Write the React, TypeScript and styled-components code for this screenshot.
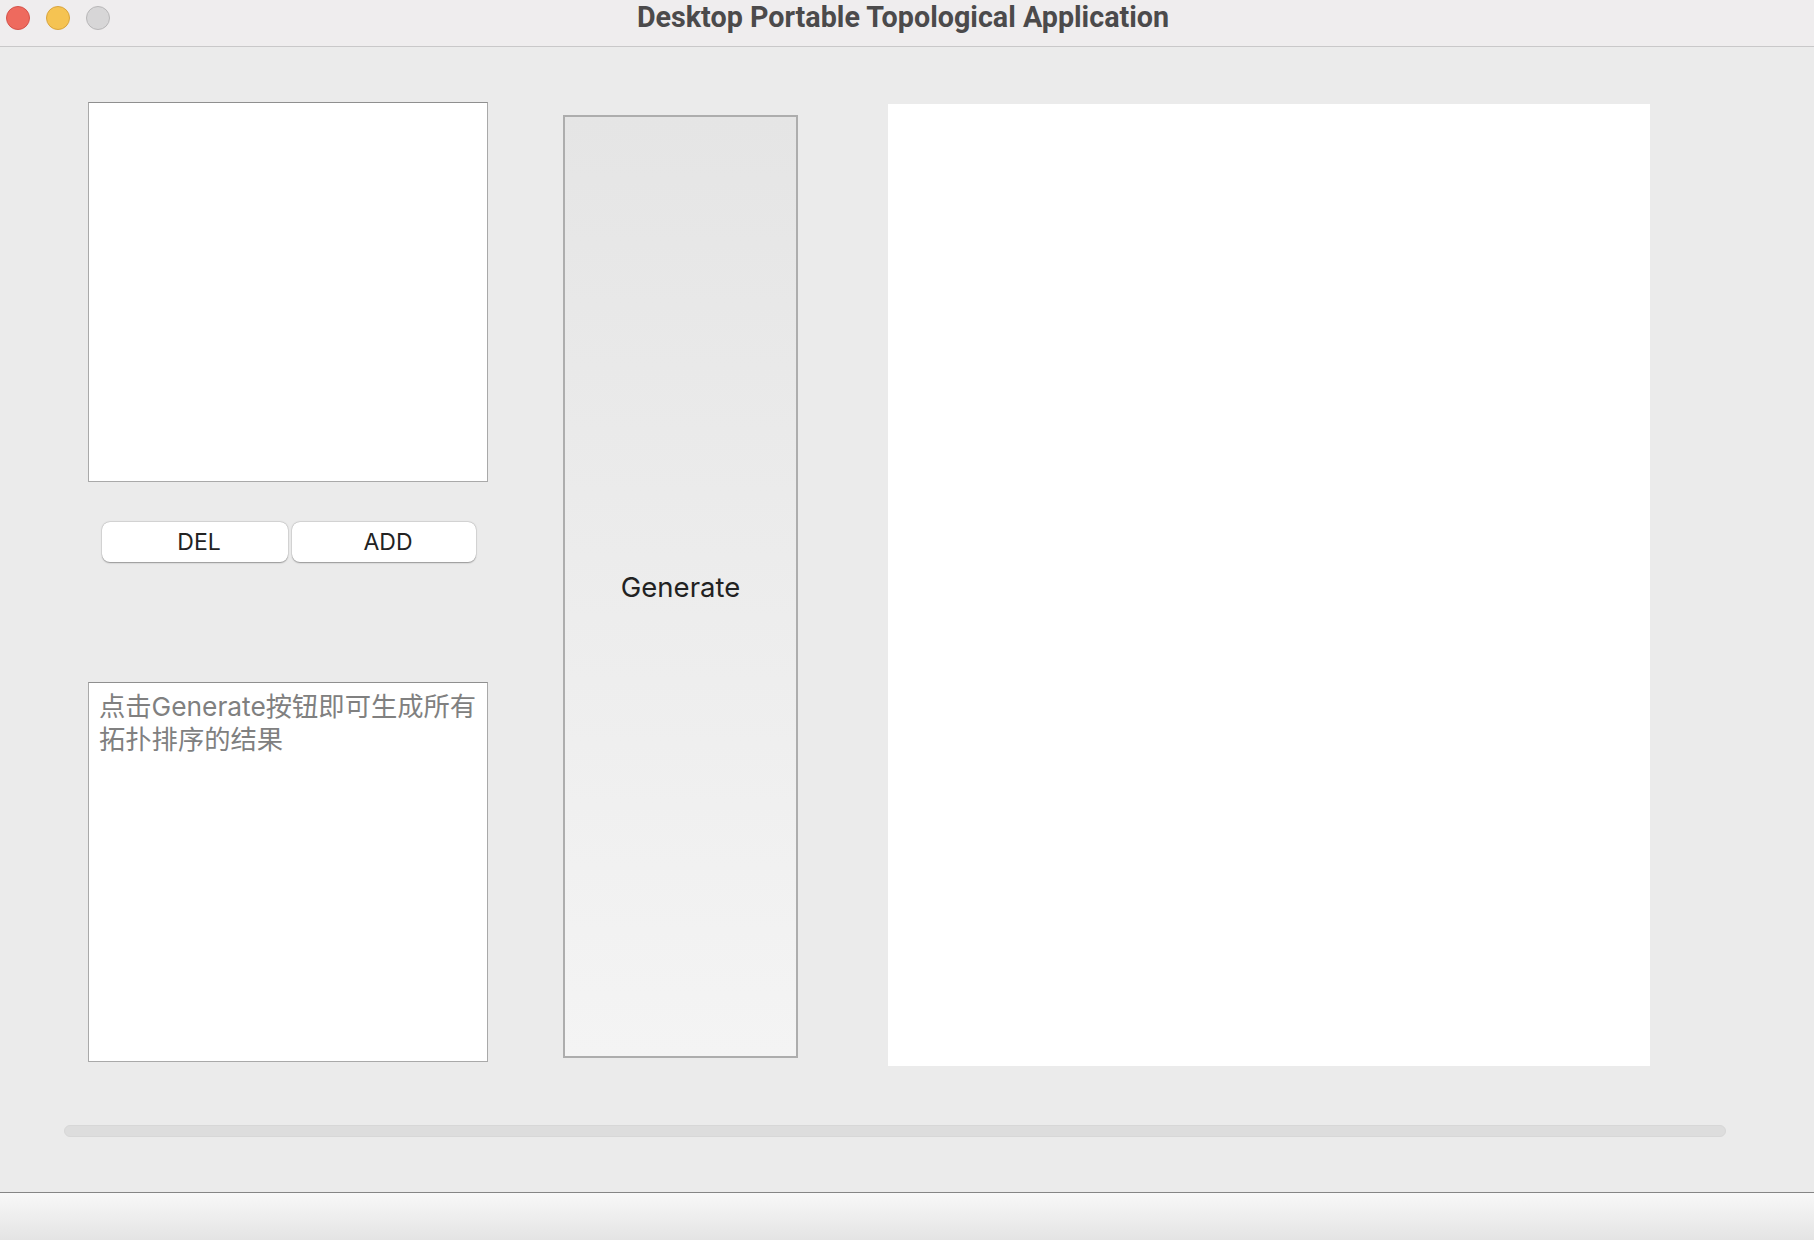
import React from "react";
import styled, { createGlobalStyle } from "styled-components";

const Global = createGlobalStyle`
  html, body { margin: 0; padding: 0; background: #ebebeb; }
  body { font-family: "Inter", "Noto Sans CJK SC", sans-serif; }
  #root { min-height: 100vh; display: flex; flex-direction: column; }
`;

const Window = styled.div`
  display: flex;
  flex-direction: column;
  height: 1240px;
  width: 1814px;
  overflow: hidden;
  background: #ebebeb;
`;

const TitleBar = styled.div`
  height: 46px;
  flex: none;
  display: flex;
  align-items: flex-start;
  background: #efedee;
  border-bottom: 1px solid #c9c8c9;
`;

const Lights = styled.div`
  display: flex;
  gap: 16px;
  padding: 6px 0 0 6px;
  width: 104px;
`;

const Light = styled.span<{ $fill: string; $edge: string }>`
  width: 22px;
  height: 22px;
  border-radius: 50%;
  background: ${(p) => p.$fill};
  border: 1px solid ${(p) => p.$edge};
`;

const Title = styled.div`
  flex: 1;
  text-align: center;
  padding-right: 118px;
  padding-top: 1px;
  font-family: "Roboto", "Liberation Sans", sans-serif;
  font-weight: 700;
  font-size: 28.7px;
  line-height: 32px;
  color: #4b4a4b;
`;

const Main = styled.div`
  flex: 1;
  display: flex;
  flex-direction: column;
  padding-top: 55px;
`;

const Row = styled.div`
  display: flex;
  align-items: flex-start;
  padding-left: 88px;
`;

const LeftColumn = styled.div`
  width: 400px;
  display: flex;
  flex-direction: column;
`;

const ListBox = styled.div`
  box-sizing: border-box;
  width: 400px;
  height: 380px;
  background: #fff;
  border: 1px solid #a9a9a9;
  border-top-color: #8f8f8f;
`;

const ButtonRow = styled.div`
  display: flex;
  gap: 4px;
  margin-top: 40px;
  padding-left: 14px;
`;

const SmallButton = styled.button<{ $w: number }>`
  box-sizing: border-box;
  width: ${(p) => p.$w}px;
  height: 40px;
  background: #fff;
  border: none;
  border-radius: 8px;
  box-shadow: 0 0.5px 1.5px rgba(0, 0, 0, 0.35), 0 0 0 0.5px rgba(0, 0, 0, 0.08);
  font-family: "Inter", "Noto Sans", sans-serif;
  font-size: 23px;
  color: #222;
  padding: 0 0 0 8px;
  cursor: pointer;
`;

const ResultBox = styled.div`
  box-sizing: border-box;
  width: 400px;
  height: 380px;
  margin-top: 120px;
  background: #fff;
  border: 1px solid #a9a9a9;
  border-top-color: #8f8f8f;
  padding: 7px 10px;
  font-family: "Inter", "Noto Sans CJK SC", sans-serif;
  font-size: 26.3px;
  line-height: 33px;
  color: #808080;
`;

const GenerateButton = styled.button`
  box-sizing: border-box;
  width: 235px;
  height: 943px;
  margin-left: 75px;
  margin-top: 13px;
  border: 2px solid #adadad;
  background: linear-gradient(#e5e5e5, #f4f4f4);
  font-family: "Inter", "Noto Sans", sans-serif;
  font-size: 27.5px;
  color: #222;
  cursor: pointer;
  padding: 0;
`;

const Canvas = styled.div`
  width: 762px;
  height: 962px;
  margin-left: 90px;
  margin-top: 2px;
  background: #fff;
`;

const Track = styled.div`
  box-sizing: border-box;
  margin: 59px 0 0 64px;
  width: 1662px;
  height: 12px;
  border-radius: 6px;
  background: #dddddd;
  border: 1px solid #d7d7d7;
`;

const Footer = styled.div`
  height: 47px;
  flex: none;
  border-top: 1px solid #858585;
  background: linear-gradient(#f8f8f8, #e4e4e4);
`;

export default function App() {
  return (
    <>
      <Global />
      <Window>
        <TitleBar>
          <Lights>
            <Light $fill="#ee6a5e" $edge="#d5524a" />
            <Light $fill="#f5c352" $edge="#d9a43d" />
            <Light $fill="#d7d6d7" $edge="#b8b7b8" />
          </Lights>
          <Title>Desktop Portable Topological Application</Title>
        </TitleBar>
        <Main>
          <Row>
            <LeftColumn>
              <ListBox />
              <ButtonRow>
                <SmallButton $w={186}>DEL</SmallButton>
                <SmallButton $w={184}>ADD</SmallButton>
              </ButtonRow>
              <ResultBox>点击Generate按钮即可生成所有拓扑排序的结果</ResultBox>
            </LeftColumn>
            <GenerateButton>Generate</GenerateButton>
            <Canvas />
          </Row>
          <Track />
        </Main>
        <Footer />
      </Window>
    </>
  );
}
